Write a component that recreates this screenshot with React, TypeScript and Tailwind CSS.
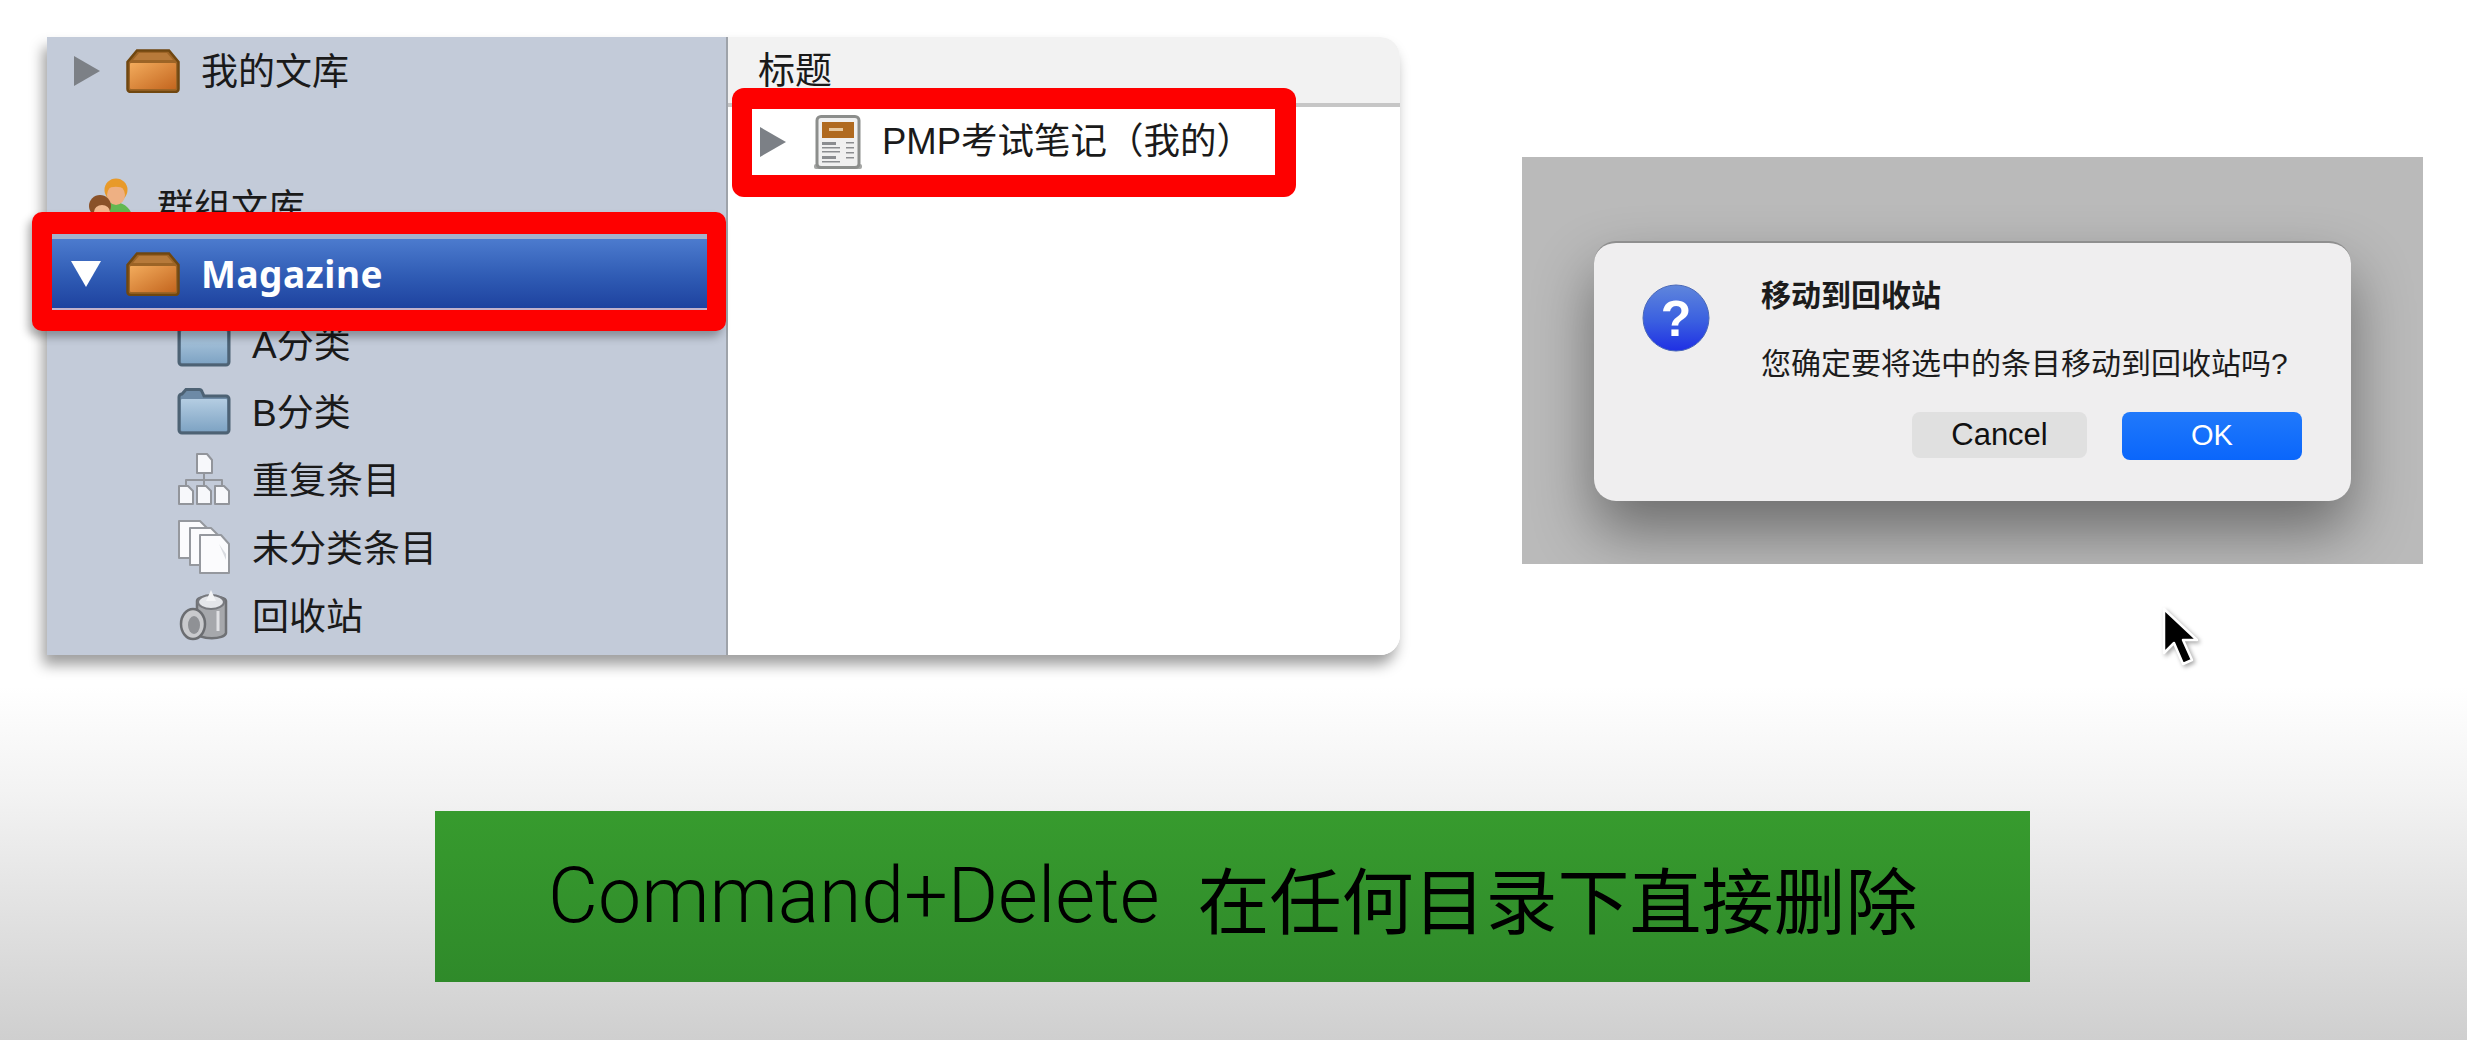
const Triangle = () => (
  <svg width="26" height="30" viewBox="0 0 26 30" className="shrink-0">
    <polygon points="0,0 26,15 0,30" fill="#7c8086" />
  </svg>
);

const BoxIcon = () => (
  <svg width="54" height="44" viewBox="0 0 54 44" className="shrink-0">
    <defs>
      <linearGradient id="boxBody" x1="0" y1="0" x2="1" y2="1">
        <stop offset="0" stopColor="#f2ab5c" />
        <stop offset="1" stopColor="#c4661f" />
      </linearGradient>
    </defs>
    <path d="M11 1.5H43L52.5 13V40a3 3 0 0 1-3 3H4.500a3 3 0 0 1-3-3V13Z" fill="#9c6426" stroke="#704710" strokeWidth="2.500" />
    <path d="M13 4H41L47 11H7Z" fill="#b77a3a" />
    <rect x="4" y="14" width="46" height="26" rx="1" fill="url(#boxBody)" />
  </svg>
);

const FolderIcon = () => (
  <svg width="54" height="48" viewBox="0 0 54 48" className="shrink-0">
    <defs>
      <linearGradient id="folderBody" x1="0" y1="0" x2="0" y2="1">
        <stop offset="0" stopColor="#b4cde2" />
        <stop offset="1" stopColor="#7fa4c4" />
      </linearGradient>
    </defs>
    <path d="M2 10a3 3 0 0 1 3-3l4-4.500H22a3 3 0 0 1 3 2L27 9H49a3 3 0 0 1 3 3V43a3 3 0 0 1-3 3H5a3 3 0 0 1-3-3Z" fill="#6d8aa6" stroke="#4d6274" strokeWidth="3" />
    <rect x="4" y="12" width="46" height="32" rx="1" fill="url(#folderBody)" />
  </svg>
);

const DuplicateIcon = () => (
  <svg width="54" height="52" viewBox="0 0 54 52" className="shrink-0">
    <g fill="#f7f8fb" stroke="#92959b" strokeWidth="2" strokeLinejoin="round">
      <path d="M20 1H30L35 7V20H20Z" />
      <path d="M27 20V27M9 34V27H45V34M27 27V34" fill="none" />
      <path d="M2 33H11L16 38V51H2Z" />
      <path d="M20 33H29L34 38V51H20Z" />
      <path d="M38 33H47L52 38V51H38Z" />
    </g>
  </svg>
);

const PagesIcon = () => (
  <svg width="54" height="54" viewBox="0 0 54 54" className="shrink-0">
    <g fill="#fbfbfd" stroke="#95989e" strokeWidth="2" strokeLinejoin="round">
      <path d="M2 1H23L30 8V38H2Z" />
      <path d="M13 8H34L41 15V45H13Z" />
      <path d="M23 15H44L52 24V53H23Z" />
    </g>
    <path d="M42 24L49 34V40Z" fill="#d9dbe0" />
  </svg>
);

const TrashIcon = () => (
  <svg width="50" height="52" viewBox="0 0 50 52" className="shrink-0">
    <path d="M18 12C18 6 46 6 47 12V44C46 51 20 51 18 44Z" fill="#a6a8ac" stroke="#6f7175" strokeWidth="2.500" />
    <ellipse cx="32" cy="13" rx="13" ry="7" fill="#e4e6ea" stroke="#77797e" strokeWidth="2" />
    <path d="M27 12L32 1L37 12Z" fill="#f3f4f6" />
    <path d="M39 22V42" stroke="#e0e1e4" strokeWidth="3" />
    <ellipse cx="14" cy="35" rx="12" ry="15" fill="#c9cacd" stroke="#6b6d71" strokeWidth="2.500" />
    <ellipse cx="15" cy="36" rx="6" ry="9" fill="#8f9195" />
  </svg>
);

const PeopleIcon = () => (
  <svg width="47" height="47" viewBox="0 0 47 47" className="shrink-0 self-start mt-[5px]">
    <path d="M17 47V30C17 24 26 23 31 25C38 27 44 33 46 47Z" fill="#62b851" />
    <circle cx="27" cy="12" r="11.500" fill="#e89a2a" />
    <ellipse cx="27" cy="17" rx="9" ry="10" fill="#eeb083" />
    <path d="M17 11C20 4 33 4 36 11C30 8 24 8 17 11Z" fill="#e89a2a" />
    <circle cx="11" cy="28" r="11" fill="#8a5128" />
    <ellipse cx="13" cy="34" rx="8" ry="7" fill="#f0b88f" />
  </svg>
);

const ReportIcon = () => (
  <svg width="50" height="55" viewBox="0 0 50 55" className="shrink-0">
    <rect x="1" y="49" width="48" height="5" rx="2" fill="#a4a6a4" />
    <rect x="4" y="1.500" width="42" height="51" rx="4" fill="#f0f0f0" stroke="#8c8e8c" strokeWidth="3" />
    <rect x="9" y="7" width="32" height="16" fill="#b06a20" />
    <rect x="16" y="13" width="14" height="3" fill="#e8c9a0" />
    <g fill="#8b8d90">
      <rect x="9" y="27" width="14" height="3" />
      <rect x="9" y="32" width="18" height="1.500" />
      <rect x="9" y="36" width="18" height="1.500" />
      <rect x="9" y="41" width="14" height="3" />
      <rect x="9" y="46" width="18" height="1.500" />
      <rect x="33" y="27" width="8" height="1.500" />
      <rect x="33" y="32" width="8" height="1.500" />
      <rect x="33" y="37" width="8" height="1.500" />
      <rect x="33" y="42" width="8" height="1.500" />
    </g>
  </svg>
);

const QuestionIcon = () => (
  <svg width="68" height="68" viewBox="0 0 68 68" className="shrink-0">
    <defs>
      <linearGradient id="qBlue" x1="0" y1="0" x2="0" y2="1">
        <stop offset="0" stopColor="#5f86dc" />
        <stop offset="0.55" stopColor="#3a5fe0" />
        <stop offset="1" stopColor="#1f2fe4" />
      </linearGradient>
    </defs>
    <circle cx="34" cy="34" r="33" fill="url(#qBlue)" stroke="#4a68b8" strokeWidth="1" />
    <text x="34" y="52" textAnchor="middle" fontSize="50" fontWeight="700" fill="#ffffff" fontFamily="Liberation Sans, sans-serif">?</text>
  </svg>
);

const Cursor = () => (
  <svg width="40" height="60" viewBox="0 0 40 60" className="absolute left-[2161px] top-[607px] drop-shadow-[2px_2px_2px_rgba(0,0,0,0.35)]">
    <path d="M3 2V46L13 36L22 57L31 53L22 33H36Z" fill="#000000" stroke="#ffffff" strokeWidth="2.500" strokeLinejoin="round" />
  </svg>
);

const childRows = [
  { label: "A分类", icon: <FolderIcon /> },
  { label: "B分类", icon: <FolderIcon /> },
  { label: "重复条目", icon: <DuplicateIcon /> },
  { label: "未分类条目", icon: <PagesIcon /> },
  { label: "回收站", icon: <TrashIcon /> },
];

export default function App() {
  return (
    <div className="relative w-[2467px] h-[1040px] overflow-hidden pt-[37px] pl-[47px] bg-[linear-gradient(to_bottom,#ffffff_66%,#f3f3f3_76%,#cfcfcf_100%)] font-['Liberation_Sans','Noto_Sans_CJK_SC',sans-serif] text-[#1a1a1a]">
      <div className="flex items-start">
        {/* Library window */}
        <div className="flex w-[1353px] h-[618px] rounded-r-[20px] shadow-[-4px_10px_14px_rgba(0,0,0,0.38)]">
          <div className="w-[681px] shrink-0 flex flex-col bg-[#c3cbd9] border-r-2 border-[#9ea3aa] text-[37px]">
            <div className="h-[68px] flex items-center pl-[27px]">
              <Triangle />
              <div className="ml-[26px]"><BoxIcon /></div>
              <span className="ml-[21px] mt-[3px]">我的文库</span>
            </div>
            <div className="h-[68px]" />
            <div className="h-[68px] flex items-center pl-[42px]">
              <PeopleIcon />
              <span className="ml-[21px] mt-[3px]">群组文库</span>
            </div>

            {/* Selected library with the red highlight */}
            <div className="relative z-10 h-[119px] -mt-[29px] -mb-[22px] -ml-[15px] rounded-[10px] bg-[#fe0000] pt-[22px] pb-[21px] pl-[20px] pr-[19px] shadow-[-4px_6px_8px_rgba(0,0,0,0.3)]">
              <div className="h-full flex items-center pl-[19px] border-t-[5px] border-b-2 border-t-[#a3b3cc] border-b-[#c2b2cc] bg-[linear-gradient(to_bottom,#4c7bce,#2f5bb4_55%,#1e429f)]">
                <svg width="30" height="26" viewBox="0 0 30 26" className="shrink-0">
                  <polygon points="0,0 30,0 15,26" fill="#ffffff" />
                </svg>
                <div className="ml-[25px]"><BoxIcon /></div>
                <span className="ml-[21px] font-['Noto_Sans',sans-serif] font-bold text-[37px] tracking-[0.5px] text-white">Magazine</span>
              </div>
            </div>

            {childRows.map((row) => (
              <div key={row.label} className="h-[68px] flex items-center pl-[130px]">
                <div className="w-[54px] flex justify-center">{row.icon}</div>
                <span className="ml-[21px] mt-[6px]">{row.label}</span>
              </div>
            ))}
          </div>

          <div className="flex-1 flex flex-col bg-white rounded-r-[20px]">
            <div className="h-[70px] shrink-0 flex items-center pl-[30px] bg-[#f2f2f2] border-b-4 border-[#c6c6c6] rounded-tr-[20px] text-[37px]">
              <span className="mt-[3px]">标题</span>
            </div>
            <div className="relative z-10 w-[564px] h-[109px] -mt-[19px] ml-[4px] rounded-[12px] bg-[#fe0000] pt-[21px] pb-[22px] pl-[20px] pr-[21px]">
              <div className="h-full flex items-center pl-[8px] bg-white">
                <Triangle />
                <div className="ml-[27px]"><ReportIcon /></div>
                <span className="ml-[19px] text-[36.5px] whitespace-nowrap">PMP考试笔记（我的）</span>
              </div>
            </div>
          </div>
        </div>

        {/* Confirm dialog */}
        <div className="ml-[122px] mt-[120px] w-[901px] h-[407px] shrink-0 overflow-hidden bg-[#bababa] pl-[72px] pt-[84px]">
          <div className="w-[757px] h-[260px] flex flex-col rounded-[22px] bg-[#efeeef] border-t-2 border-[#8f8f8f] shadow-[0_30px_60px_rgba(0,0,0,0.42)] pt-[41px] pl-[48px] pr-[49px]">
            <div className="flex">
              <QuestionIcon />
              <div className="ml-[51px] flex flex-col text-[#1c1c1c]">
                <span className="text-[30px] leading-[26px] font-bold -mt-px">移动到回收站</span>
                <span className="text-[30px] leading-[32px] mt-[39px] whitespace-nowrap">您确定要将选中的条目移动到回收站吗?</span>
              </div>
            </div>
            <div className="flex justify-end items-start gap-[35px] mt-[32px]">
              <div className="w-[175px] h-[46px] flex items-center justify-center rounded-[8px] bg-[#e0e0e0] text-[31px] text-[#111111]">Cancel</div>
              <div className="w-[180px] h-[48px] flex items-center justify-center rounded-[8px] bg-[linear-gradient(to_bottom,#2079fb,#0a66fb)] text-[29px] text-white">OK</div>
            </div>
          </div>
        </div>
      </div>

      {/* Caption banner */}
      <div className="mt-[156px] ml-[388px] w-[1595px] h-[171px] flex items-center pl-[113px] bg-[linear-gradient(to_bottom,#379b2e,#2f8a2a)] text-black">
        <span className="text-[77px] leading-none font-['Roboto',sans-serif] font-light whitespace-nowrap">Command+Delete</span>
        <span className="ml-[38px] text-[72px] leading-none font-normal font-['Noto_Sans_CJK_SC',sans-serif] whitespace-nowrap">在任何目录下直接删除</span>
      </div>

      <Cursor />
    </div>
  );
}
